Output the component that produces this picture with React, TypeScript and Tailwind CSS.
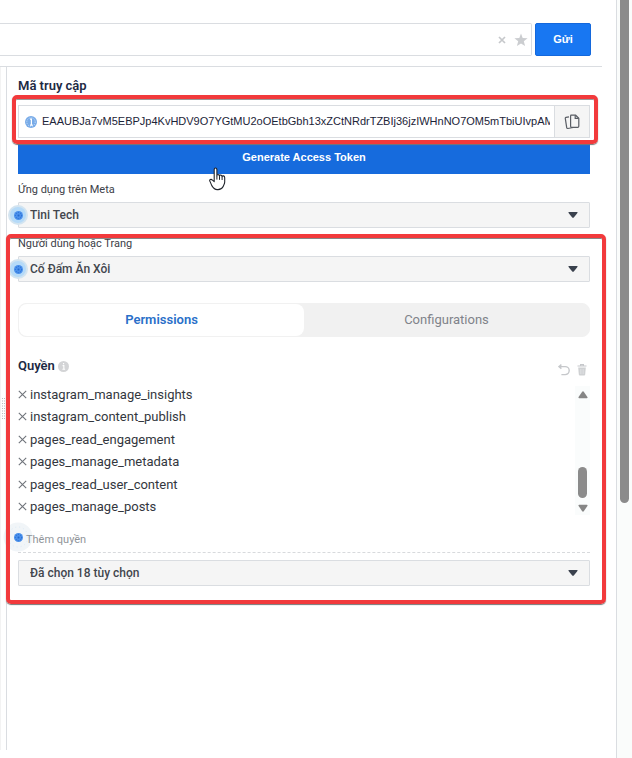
import { useState } from "react";

const TOKEN =
  "EAAUBJa7vM5EBPJp4KvHDV9O7YGtMU2oOEtbGbh13xZCtNRdrTZBIj36jzIWHnNO7OM5mTbiUIvpAMyN8";

const INITIAL_PERMISSIONS = [
  "instagram_manage_insights",
  "instagram_content_publish",
  "pages_read_engagement",
  "pages_manage_metadata",
  "pages_read_user_content",
  "pages_manage_posts",
];

function PulseDot() {
  return (
    <svg
      viewBox="0 0 30 30"
      className="pointer-events-none absolute top-1/2 -left-[15px] z-10 size-[30px] -translate-y-1/2"
      aria-hidden="true"
    >
      <circle cx="15" cy="15" r="10" fill="#d3e4f0" />
      <circle cx="15" cy="15" r="8" fill="#b5daf8" />
      <circle cx="15.5" cy="15.5" r="4.5" fill="#4a90ec" />
      <circle cx="15.5" cy="15.5" r="3" fill="none" stroke="#2469cd" strokeDasharray="1 1.2" />
      <circle cx="15.5" cy="15.5" r="1" fill="#2469cd" />
    </svg>
  );
}

function FadedDot() {
  return (
    <svg
      viewBox="0 0 30 30"
      className="pointer-events-none absolute -top-[10px] -left-[15px] size-[30px]"
      aria-hidden="true"
    >
      <circle cx="15" cy="15" r="14.5" fill="#f1f5f8" />
      <circle cx="15" cy="15" r="10" fill="none" stroke="#dcebf7" strokeDasharray="1 3" />
      <circle cx="15.5" cy="15.5" r="4.5" fill="#4a90ec" />
      <circle cx="15.5" cy="15.5" r="3" fill="none" stroke="#2469cd" strokeDasharray="1 1.2" />
      <circle cx="15.5" cy="15.5" r="1" fill="#2469cd" />
    </svg>
  );
}

function SelectField({ id, label, value }: { id: string; label: string; value: string }) {
  return (
    <div className="mt-2">
      <label htmlFor={id} className="block text-[11px] leading-4 text-[#3c4047]">
        {label}
      </label>
      <div className="relative mt-1">
        <PulseDot />
        <SelectBox id={id} value={value} />
      </div>
    </div>
  );
}

function SelectBox({ id, value }: { id: string; value: string }) {
  return (
    <div className="relative">
      <select
        id={id}
        className="block h-[26px] w-full appearance-none rounded-[1px] border border-[#dadde1] bg-[#f5f5f5] pr-8 pl-[11px] text-[12px] font-medium text-[#42464d]"
      >
        <option>{value}</option>
      </select>
      <svg
        viewBox="0 0 10 6"
        className="pointer-events-none absolute top-[10px] right-3 h-[6px] w-[10px]"
        aria-hidden="true"
      >
        <path d="M1 0h8q1 .2.4 1L5.8 5.4q-.8.8-1.6 0L.6 1Q0 .2 1 0Z" fill="#3a414d" />
      </svg>
    </div>
  );
}

function QueryBar() {
  return (
    <form
      className="mr-[14px] flex gap-[3px] border-b border-[#dadde1] pt-[23px] pr-[11px] pb-[10px]"
      onSubmit={(e) => e.preventDefault()}
    >
      <div className="flex h-[33px] flex-1 items-center rounded-r-[2px] border border-l-0 border-[#dadde1] pr-[3px]">
        <input aria-label="Query" className="h-full min-w-0 flex-1 px-2 text-[11px] outline-none" />
        <button type="button" aria-label="Clear" className="mr-2">
          <svg viewBox="0 0 8 8" className="size-2" aria-hidden="true">
            <path d="m1 1 6 6M7 1 1 7" stroke="#c6c8cb" strokeWidth="1.7" />
          </svg>
        </button>
        <button type="button" aria-label="Favorite">
          <svg viewBox="0 0 14 14" className="size-[14px]" aria-hidden="true">
            <path
              d="m7 .6 1.7 4.5 4.9.2-3.8 3 1.3 4.8L7 10.4l-4.1 2.7 1.3-4.8-3.8-3 4.9-.2Z"
              fill="#cbcdd0"
            />
          </svg>
        </button>
      </div>
      <button
        type="submit"
        className="w-14 rounded-[2px] border border-[#1468dc] bg-[#1877f2] font-['Liberation_Sans',sans-serif] text-[11px] font-bold text-white"
      >
        Gửi
      </button>
    </form>
  );
}

function TokenField() {
  return (
    <div className="relative mt-[9px] flex h-[33px] border border-[#dadde1]">
      <svg viewBox="0 0 12 12" className="ml-[6px] size-3 self-center" aria-hidden="true">
        <circle cx="6" cy="6" r="6" fill="#78abe8" />
        <circle cx="6" cy="6" r="4.2" fill="none" stroke="#d3e5fa" strokeDasharray="1 1.2" />
        <path d="M5 3.2h1.4v6M5 9.2h2.8" fill="none" stroke="#fff" strokeWidth="1.2" />
      </svg>
      <input
        id="token"
        readOnly
        defaultValue={TOKEN}
        className="mr-1 ml-[5px] min-w-0 flex-1 font-['Liberation_Sans',sans-serif] text-[11px] text-[#1c2438] outline-none"
      />
      <button
        type="button"
        aria-label="Copy"
        className="flex w-[35px] items-center justify-center border-l border-[#dadde1] bg-[#f5f5f5]"
      >
        <svg viewBox="0 0 16 16" className="size-4" fill="none" stroke="#5a5e65" strokeWidth="1.2" aria-hidden="true">
          <path d="M6.6 1.2h5l3.2 3v8.1q0 1-1 1H7.5q-.9 0-.9-1V2q0-.8.8-.8Z" />
          <path d="M11.2 1.4v3h3.3" />
          <path d="M5 2.9 2 3.4q-.9.2-.7 1l1.4 9.2q.2 1 1.1.9l5.4-1" />
        </svg>
      </button>
      {/* callout around the token row */}
      <div className="pointer-events-none absolute -top-[11px] -right-[9px] -bottom-[7px] -left-[7px] z-10 rounded-[5px] border-4 border-[#f23a3c] shadow-[0_1px_1px_#777,inset_0_1px_0_#999]" />
    </div>
  );
}

function HandCursor() {
  return (
    <svg
      viewBox="0 0 20 24"
      className="pointer-events-none absolute top-[26px] left-[190px] z-20 h-6 w-5"
      aria-hidden="true"
    >
      <path
        d="M6.2 14.6V2.6Q6.2 1 7.5 1t1.4 1.6v6.2q0-1.4 1.4-1.2 1.1.1 1.2 1.6 0-1.3 1.4-1.1 1.1.2 1.2 1.6.2-1.1 1.4-.8 1.2.3 1.2 1.8V15c0 2-1.2 3.2-1.5 4.6q-1.8 3.4-6 3c-3 0-4.2-2-5.4-4L2 14.4q-.8-1.4.3-1.9 1.2-.4 2.2.6Z"
        fill="#fff"
        stroke="#20242c"
        strokeWidth="1.1"
        strokeLinejoin="round"
      />
      <path d="M8.9 8.8v3.8M11.5 9.2v3.6M14.1 9.7v3.3" stroke="#20242c" />
    </svg>
  );
}

function Tabs() {
  const [tab, setTab] = useState("permissions");
  const active = "bg-white font-semibold text-[#2a6fc9]";
  const idle = "text-[#80838a]";
  return (
    <div
      role="tablist"
      className="mt-[21px] grid h-[34px] grid-cols-2 rounded-lg border border-[#f1f1f1] bg-[#f1f1f1] text-[13px]"
    >
      <button
        role="tab"
        aria-selected={tab === "permissions"}
        onClick={() => setTab("permissions")}
        className={`rounded-lg ${tab === "permissions" ? active : idle}`}
      >
        Permissions
      </button>
      <button
        role="tab"
        aria-selected={tab === "configurations"}
        onClick={() => setTab("configurations")}
        className={`rounded-lg ${tab === "configurations" ? active : idle}`}
      >
        Configurations
      </button>
    </div>
  );
}

function Permissions() {
  const [items, setItems] = useState(INITIAL_PERMISSIONS);

  return (
    <section>
      <div className="mt-[19px] flex items-center">
        <h2 className="text-[13px] leading-5 font-semibold text-[#1d2a44]">Quyền</h2>
        <svg viewBox="0 0 12 12" className="ml-[3px] size-[11px]" aria-hidden="true">
          <circle cx="6" cy="6" r="6" fill="#d3d4d6" />
          <path d="M5 5h1.4v4M4.8 9h3M5.5 2.9h1.2" fill="none" stroke="#fff" strokeWidth="1.2" />
        </svg>
        <button
          aria-label="Undo"
          className="mt-2 ml-auto"
          onClick={() => setItems(INITIAL_PERMISSIONS)}
        >
          <svg viewBox="0 0 12 12" className="size-3" fill="none" stroke="#c6c8cb" strokeWidth="1.4" aria-hidden="true">
            <path d="M3.4.6.9 2.6l2.5 2M1 2.6h6.2a4 4 0 0 1 0 8H3.4" />
          </svg>
        </button>
        <button aria-label="Delete all" className="mt-2 mr-[3px] ml-[7px]" onClick={() => setItems([])}>
          <svg viewBox="0 0 10 12" className="h-3 w-[10px]" aria-hidden="true">
            <path d="M.5 2h9M3.6 1.6V.7h2.8v.9" fill="none" stroke="#c6c8cb" strokeWidth="1.2" />
            <path d="M1.2 3.5h7.6l-.6 7q-.1 1-1 1H2.8q-.9 0-1-1Z" fill="#cfd1d3" />
            <path d="M3.6 5v5M5 5v5M6.4 5v5" stroke="#e3e4e6" strokeWidth=".6" />
          </svg>
        </button>
      </div>

      <div className="mt-[7px] flex justify-between">
        <ul className="grid h-[135px] grid-rows-6">
          {items.map((name) => (
            <li key={name} className="flex items-center gap-[3px] text-[13px] text-[#33373e]">
              <button
                aria-label={`Remove ${name}`}
                onClick={() => setItems(items.filter((i) => i !== name))}
              >
                <svg viewBox="0 0 9 9" className="size-[9px]" aria-hidden="true">
                  <path d="m.8.8 7.4 7.4M8.2.8.8 8.2" stroke="#70747b" strokeWidth="1.1" />
                </svg>
              </button>
              {name}
            </li>
          ))}
        </ul>
        <div className="my-[3px] flex w-[15px] flex-col items-center bg-[#fafcfc] pt-[5px] pb-[3px]">
          <svg viewBox="0 0 10 8" className="h-2 w-[10px]" aria-hidden="true">
            <path d="M4.2.8q.8-.9 1.6 0L9.4 6q.5 1-.6 1.2H1.2Q.1 7 .6 6Z" fill="#858585" />
          </svg>
          <div className="mt-auto h-[31px] w-[9px] rounded-full bg-[#8b8b8b]" />
          <svg viewBox="0 0 10 8" className="mt-[6px] h-2 w-[10px]" aria-hidden="true">
            <path d="M4.2 7.2q.8.9 1.6 0L9.4 2q.5-1-.6-1.2H1.2Q.1 1 .6 2Z" fill="#858585" />
          </svg>
        </div>
      </div>

      <div className="relative mt-[14px] border-b border-dashed border-[#d8dadd] pb-1">
        <FadedDot />
        <label
          htmlFor="add-permission"
          className="relative block pl-2 text-[11px] leading-4 text-[#909499]"
        >
          Thêm quyền
        </label>
      </div>
      <div className="mt-[7px]">
        <SelectBox id="add-permission" value="Đã chọn 18 tùy chọn" />
      </div>
    </section>
  );
}

export default function App() {
  return (
    <div className="flex min-h-screen bg-white font-[Roboto,sans-serif]">
      <div className="flex min-w-0 flex-1 flex-col">
        <QueryBar />
        <div className="mr-[14px] mb-2 flex flex-1">
          <div className="flex w-[6px] items-center border-l border-[#f3f3f3]">
            <svg viewBox="0 0 5 22" className="h-[22px] w-[5px]" aria-hidden="true">
              <path d="M1.5 0v22M3.5 0v22" stroke="#b9bbbe" strokeDasharray="1 1.5" />
            </svg>
          </div>
          <main className="min-w-0 flex-1 border-l border-[#dadde1] pt-[9px] pr-3 pl-[11px]">
            <label htmlFor="token" className="block text-[13px] leading-5 font-semibold text-[#1d2a44]">
              Mã truy cập
            </label>
            <TokenField />
            <div className="relative mt-[3px]">
              <button className="block h-[33px] w-full bg-[#166bdd] font-['Liberation_Sans',sans-serif] text-[11px] font-bold text-white">
                Generate Access Token
              </button>
              <HandCursor />
            </div>
            <SelectField id="app" label="Ứng dụng trên Meta" value="Tini Tech" />
            <div className="relative">
              <SelectField id="user" label="Người dùng hoặc Trang" value="Cố Đấm Ăn Xôi" />
              <Tabs />
              <Permissions />
              {/* callout around the user and permission block */}
              <div className="pointer-events-none absolute -top-[2px] -right-4 -bottom-[18px] -left-3 z-10 rounded-[5px] border-4 border-[#f23a3c] shadow-[0_1px_1px_#777,inset_0_1px_0_#888]" />
            </div>
          </main>
        </div>
      </div>
      <div className="w-4 border-l border-[#dadde1] bg-[#fafcfb]">
        <div className="ml-[3px] h-[503px] w-[9px] rounded-b-full bg-[#8b8b8b]" />
      </div>
    </div>
  );
}
